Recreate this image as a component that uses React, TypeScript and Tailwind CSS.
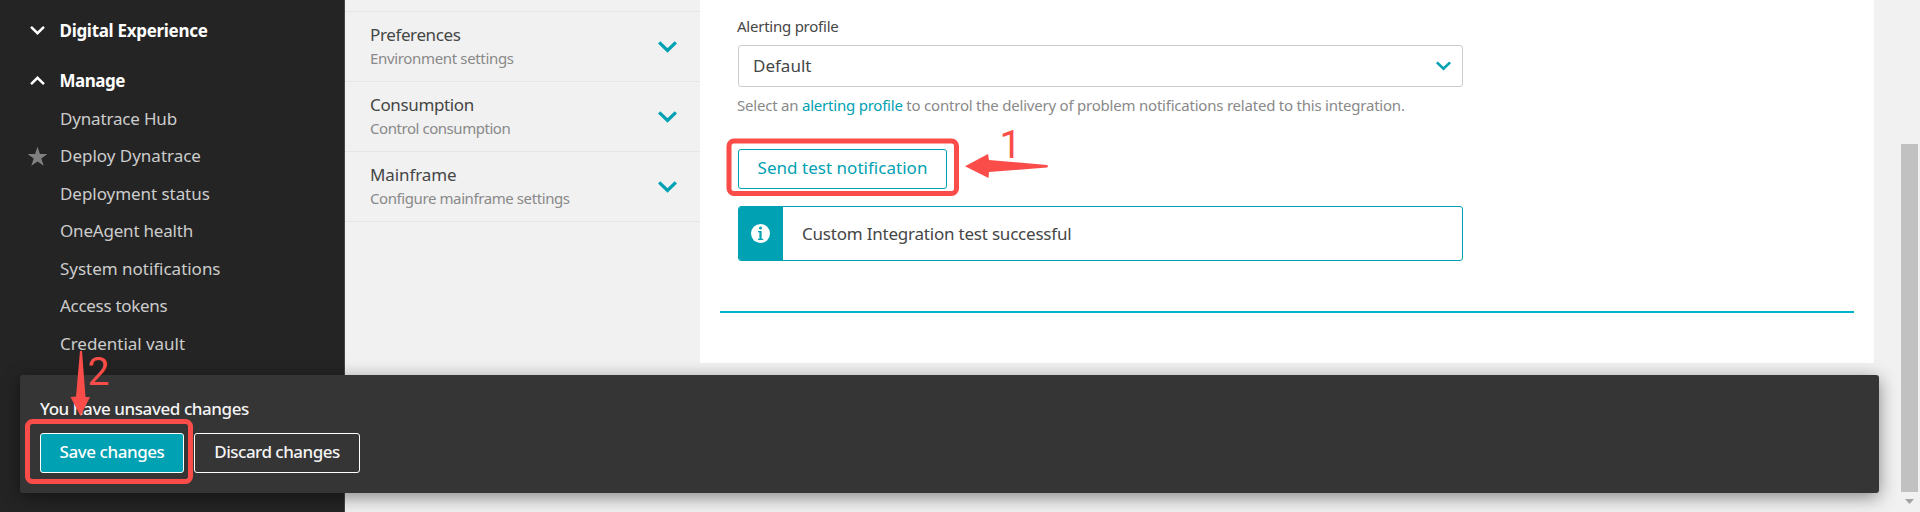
const navItems = [
  { label: 'Dynatrace Hub', spacing: 'tracking-[-0.17px]' },
  { label: 'Deploy Dynatrace', spacing: 'tracking-[-0.01px]', starred: true },
  { label: 'Deployment status', spacing: 'tracking-[-0.05px]' },
  { label: 'OneAgent health', spacing: 'tracking-[-0.2px]' },
  { label: 'System notifications', spacing: 'tracking-[-0.02px]' },
  { label: 'Access tokens', spacing: 'tracking-[-0.3px]' },
  { label: 'Credential vault', spacing: 'tracking-[-0.04px]' },
];

const settings = [
  { title: 'Preferences', text: 'Environment settings', titleSpacing: 'tracking-[-0.38px]', textSpacing: 'tracking-[-0.34px]' },
  { title: 'Consumption', text: 'Control consumption', titleSpacing: 'tracking-[-0.36px]', textSpacing: 'tracking-[-0.45px]' },
  { title: 'Mainframe', text: 'Configure mainframe settings', titleSpacing: 'tracking-[-0.1px]', textSpacing: 'tracking-[-0.41px]' },
];

function Chevron({ className }: { className: string }) {
  return (
    <svg className={className} viewBox="0 0 18 11" fill="none" stroke="currentColor" strokeWidth="3.1">
      <path d="M1.1 1.1 L9 8.7 L16.9 1.1" />
    </svg>
  );
}

function Sidebar() {
  return (
    <aside className="flex w-[345px] shrink-0 flex-col border-r border-[#454545] bg-[#242424] pt-3 text-[17px] text-[#cccccc]">
      <div className="flex h-[37px] items-center font-bold text-white">
        <Chevron className="ml-[30px] mr-[14.5px] h-[9px] w-[15px]" />
        <span className="tracking-[-0.3px]">Digital Experience</span>
      </div>
      <div className="mt-[13px] flex h-[37px] items-center font-bold text-white">
        <Chevron className="ml-[30px] mr-[14.5px] h-[9px] w-[15px] rotate-180" />
        <span className="tracking-[-0.5px]">Manage</span>
      </div>
      <nav className="flex flex-col pt-[0.9px]">
        {navItems.map((item) => (
          <div key={item.label} className="flex h-[37.5px] items-center">
            <div className="flex w-[60px] pl-[27px]">
              {item.starred && (
                <svg className="size-[21px] text-[#808080]" viewBox="0 0 21 21" fill="currentColor">
                  <path d="M10.5 0.8 L12.9 8 H20.4 L14.3 12.4 L16.7 19.8 L10.5 15.4 L4.3 19.8 L6.7 12.4 L0.6 8 H8.1 Z" />
                </svg>
              )}
            </div>
            <span className={item.spacing}>{item.label}</span>
          </div>
        ))}
      </nav>
    </aside>
  );
}

function SettingsList() {
  return (
    <section className="flex w-[355px] shrink-0 flex-col">
      <div className="h-3 border-b border-[#e5e5e5]" />
      {settings.map((s) => (
        <div key={s.title} className="flex h-[70px] items-start justify-between border-b border-[#e5e5e5] pl-[25px] pr-[23px]">
          <div className="pt-[11px]">
            <div className={`text-[17px] leading-6 text-[#454646] ${s.titleSpacing}`}>{s.title}</div>
            <div className={`text-[15px] leading-[22px] text-[#898989] ${s.textSpacing}`}>{s.text}</div>
          </div>
          <Chevron className="mt-[29px] h-[12px] w-[19px] text-[#00a1b2]" />
        </div>
      ))}
    </section>
  );
}

function AlertingForm() {
  return (
    <main className="flex h-[363px] w-[1174px] flex-col bg-white px-5 pt-[15px]">
      <div className="flex w-[743px] flex-col pl-[18px] text-[#454646]">
        <div className="-ml-px text-[15px] leading-[22px] tracking-[-0.24px]">Alerting profile</div>
        <div className="mt-2 flex h-[42px] items-center justify-between rounded-[3px] border border-[#cccccc] pl-3.5 pr-[11.5px] text-[17px]">
          <span>Default</span>
          <Chevron className="h-[10px] w-[15px] text-[#00a1b2]" />
        </div>
        <p className="-ml-px mt-[7px] whitespace-nowrap text-[15px] leading-[22px] tracking-[-0.217px] text-[#898989]">
          Select an <span className="text-[#00a1b2]">alerting profile</span> to control the delivery of problem
          notifications related to this integration.
        </p>
        <button className="mt-[33px] h-10 w-[209px] rounded-[3px] border border-[#00a1b2] pb-[3px] text-[17px] tracking-[0.03px] text-[#00a1b2]">
          Send test notification
        </button>
        <div className="mt-[17px] flex h-[55px] overflow-hidden rounded-[3px] border border-[#00a1b2]">
          <div className="flex w-11 items-center justify-center bg-[#00a1b2] pr-px">
            <svg className="size-[19px]" viewBox="0 0 19 19">
              <circle cx="9.5" cy="9.5" r="9.5" fill="white" />
              <circle cx="9.5" cy="4" r="1.5" fill="#00a1b2" />
              <path d="M7 7 H10.6 V14.8 H12.2 V16 H7 V14.8 H8.4 V8.2 H7 Z" fill="#00a1b2" />
            </svg>
          </div>
          <span className="self-center pl-[19px] text-[17px] tracking-[-0.21px]">Custom Integration test successful</span>
        </div>
      </div>
      <div className="mt-[50px] h-[2px] bg-[#00b4cc]" />
    </main>
  );
}

function UnsavedBar() {
  return (
    <div className="absolute left-5 top-[375px] flex h-[118px] w-[1859px] flex-col rounded-[3px] bg-[#353535] px-5 pt-[22px] text-[17px] font-medium text-[#f4f4f4] shadow-[0_4px_18px_rgba(0,0,0,0.45)]">
      <div className="leading-6 tracking-[-0.42px]">You have unsaved changes</div>
      <div className="mt-3 flex gap-2.5">
        <button className="h-10 w-36 rounded-[3px] border border-white bg-[#00a1b2] pb-[3px] tracking-[-0.45px] text-white">
          Save changes
        </button>
        <button className="h-10 w-[166px] rounded-[3px] border border-white pb-[3px] tracking-[-0.52px]">
          Discard changes
        </button>
      </div>
    </div>
  );
}

function Annotations() {
  return (
    <svg className="pointer-events-none absolute inset-0 h-[512px] w-[1920px]" viewBox="0 0 1920 512" fill="#fa4d49">
      <rect x="729" y="141" width="227.5" height="52.5" rx="5" fill="none" stroke="#fa4d49" strokeWidth="5" />
      <path d="M965 166.3 L988 154 L989 160 L1047 165 Q1049 166.3 1047 167.5 L989 172 L988.5 178 Z" />
      <text x="999.5" y="158" fontSize="39" fontFamily="Roboto, sans-serif">1</text>
      <rect x="27.5" y="421.5" width="163" height="60" rx="5" fill="none" stroke="#fa4d49" strokeWidth="5" />
      <path d="M80 351 H82 L85.5 397 H90 L80.5 416 L70.5 397 L76 396.5 Z" />
      <text x="87.5" y="385" fontSize="39" fontFamily="Roboto, sans-serif">2</text>
    </svg>
  );
}

export default function App() {
  return (
    <div className="relative flex h-[512px] w-[1920px] overflow-hidden bg-[#f1f1f1] font-['Noto_Sans',sans-serif]">
      <Sidebar />
      <SettingsList />
      <AlertingForm />
      <UnsavedBar />
      <div className="ml-auto flex w-[19px] flex-col items-start pt-36">
        <div className="h-[348px] w-[17px] bg-[#c1c1c1]" />
        <svg className="ml-1 mt-[7px] h-[5px] w-[9px]" viewBox="0 0 9 5" fill="#a3a3a3">
          <path d="M0 0 H9 L4.5 5 Z" />
        </svg>
      </div>
      <Annotations />
    </div>
  );
}
